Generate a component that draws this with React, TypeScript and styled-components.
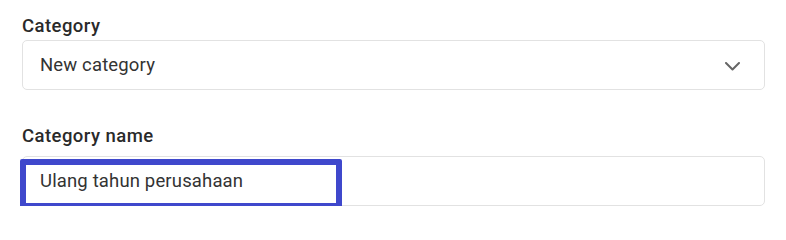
import React from "react";
import styled, { createGlobalStyle } from "styled-components";

const Global = createGlobalStyle`
  html, body { margin: 0; padding: 0; background: #ffffff; }
  body { font-family: Roboto, "Noto Sans", "Liberation Sans", sans-serif; }
  * { box-sizing: border-box; }
`;

const Form = styled.div`
  display: flex;
  flex-direction: column;
  padding: 14px 21px 0 22px;
`;

const Field = styled.div<{ $gap?: number }>`
  display: flex;
  flex-direction: column;
  margin-top: ${(p) => p.$gap ?? 0}px;
`;

const Label = styled.label<{ $space: number }>`
  font-size: 18.5px;
  line-height: 24px;
  font-weight: 500;
  letter-spacing: 0.45px;
  color: #2a2a2a;
  margin-bottom: ${(p) => p.$space}px;
`;

const Box = styled.div`
  position: relative;
  height: 50px;
  display: flex;
  align-items: center;
  justify-content: space-between;
  border: 1px solid #e2e2e2;
  border-radius: 5px;
  padding: 0 24px 0 17px;
  background: #ffffff;
`;

const Value = styled.span`
  font-size: 18.5px;
  letter-spacing: 0.15px;
  color: #333333;
`;

const Chevron = styled.svg`
  width: 15px;
  height: 9px;
  margin-top: 2px;
  display: block;
`;

const Highlight = styled.div`
  position: absolute;
  left: -3px;
  top: 2px;
  width: 322px;
  height: 50px;
  border: 6px solid #3f48cc;
  border-radius: 2px;
  pointer-events: none;
`;

export default function App() {
  return (
    <>
      <Global />
      <Form>
        <Field>
          <Label $space={2}>Category</Label>
          <Box>
            <Value>New category</Value>
            <Chevron viewBox="0 0 15 9" fill="none">
              <polyline
                points="1,1 7.5,7.5 14,1"
                stroke="#666666"
                strokeWidth="2"
                strokeLinecap="round"
                strokeLinejoin="round"
              />
            </Chevron>
          </Box>
        </Field>
        <Field $gap={34}>
          <Label $space={8}>Category name</Label>
          <Box>
            <Value>Ulang tahun perusahaan</Value>
            <Highlight />
          </Box>
        </Field>
      </Form>
    </>
  );
}
